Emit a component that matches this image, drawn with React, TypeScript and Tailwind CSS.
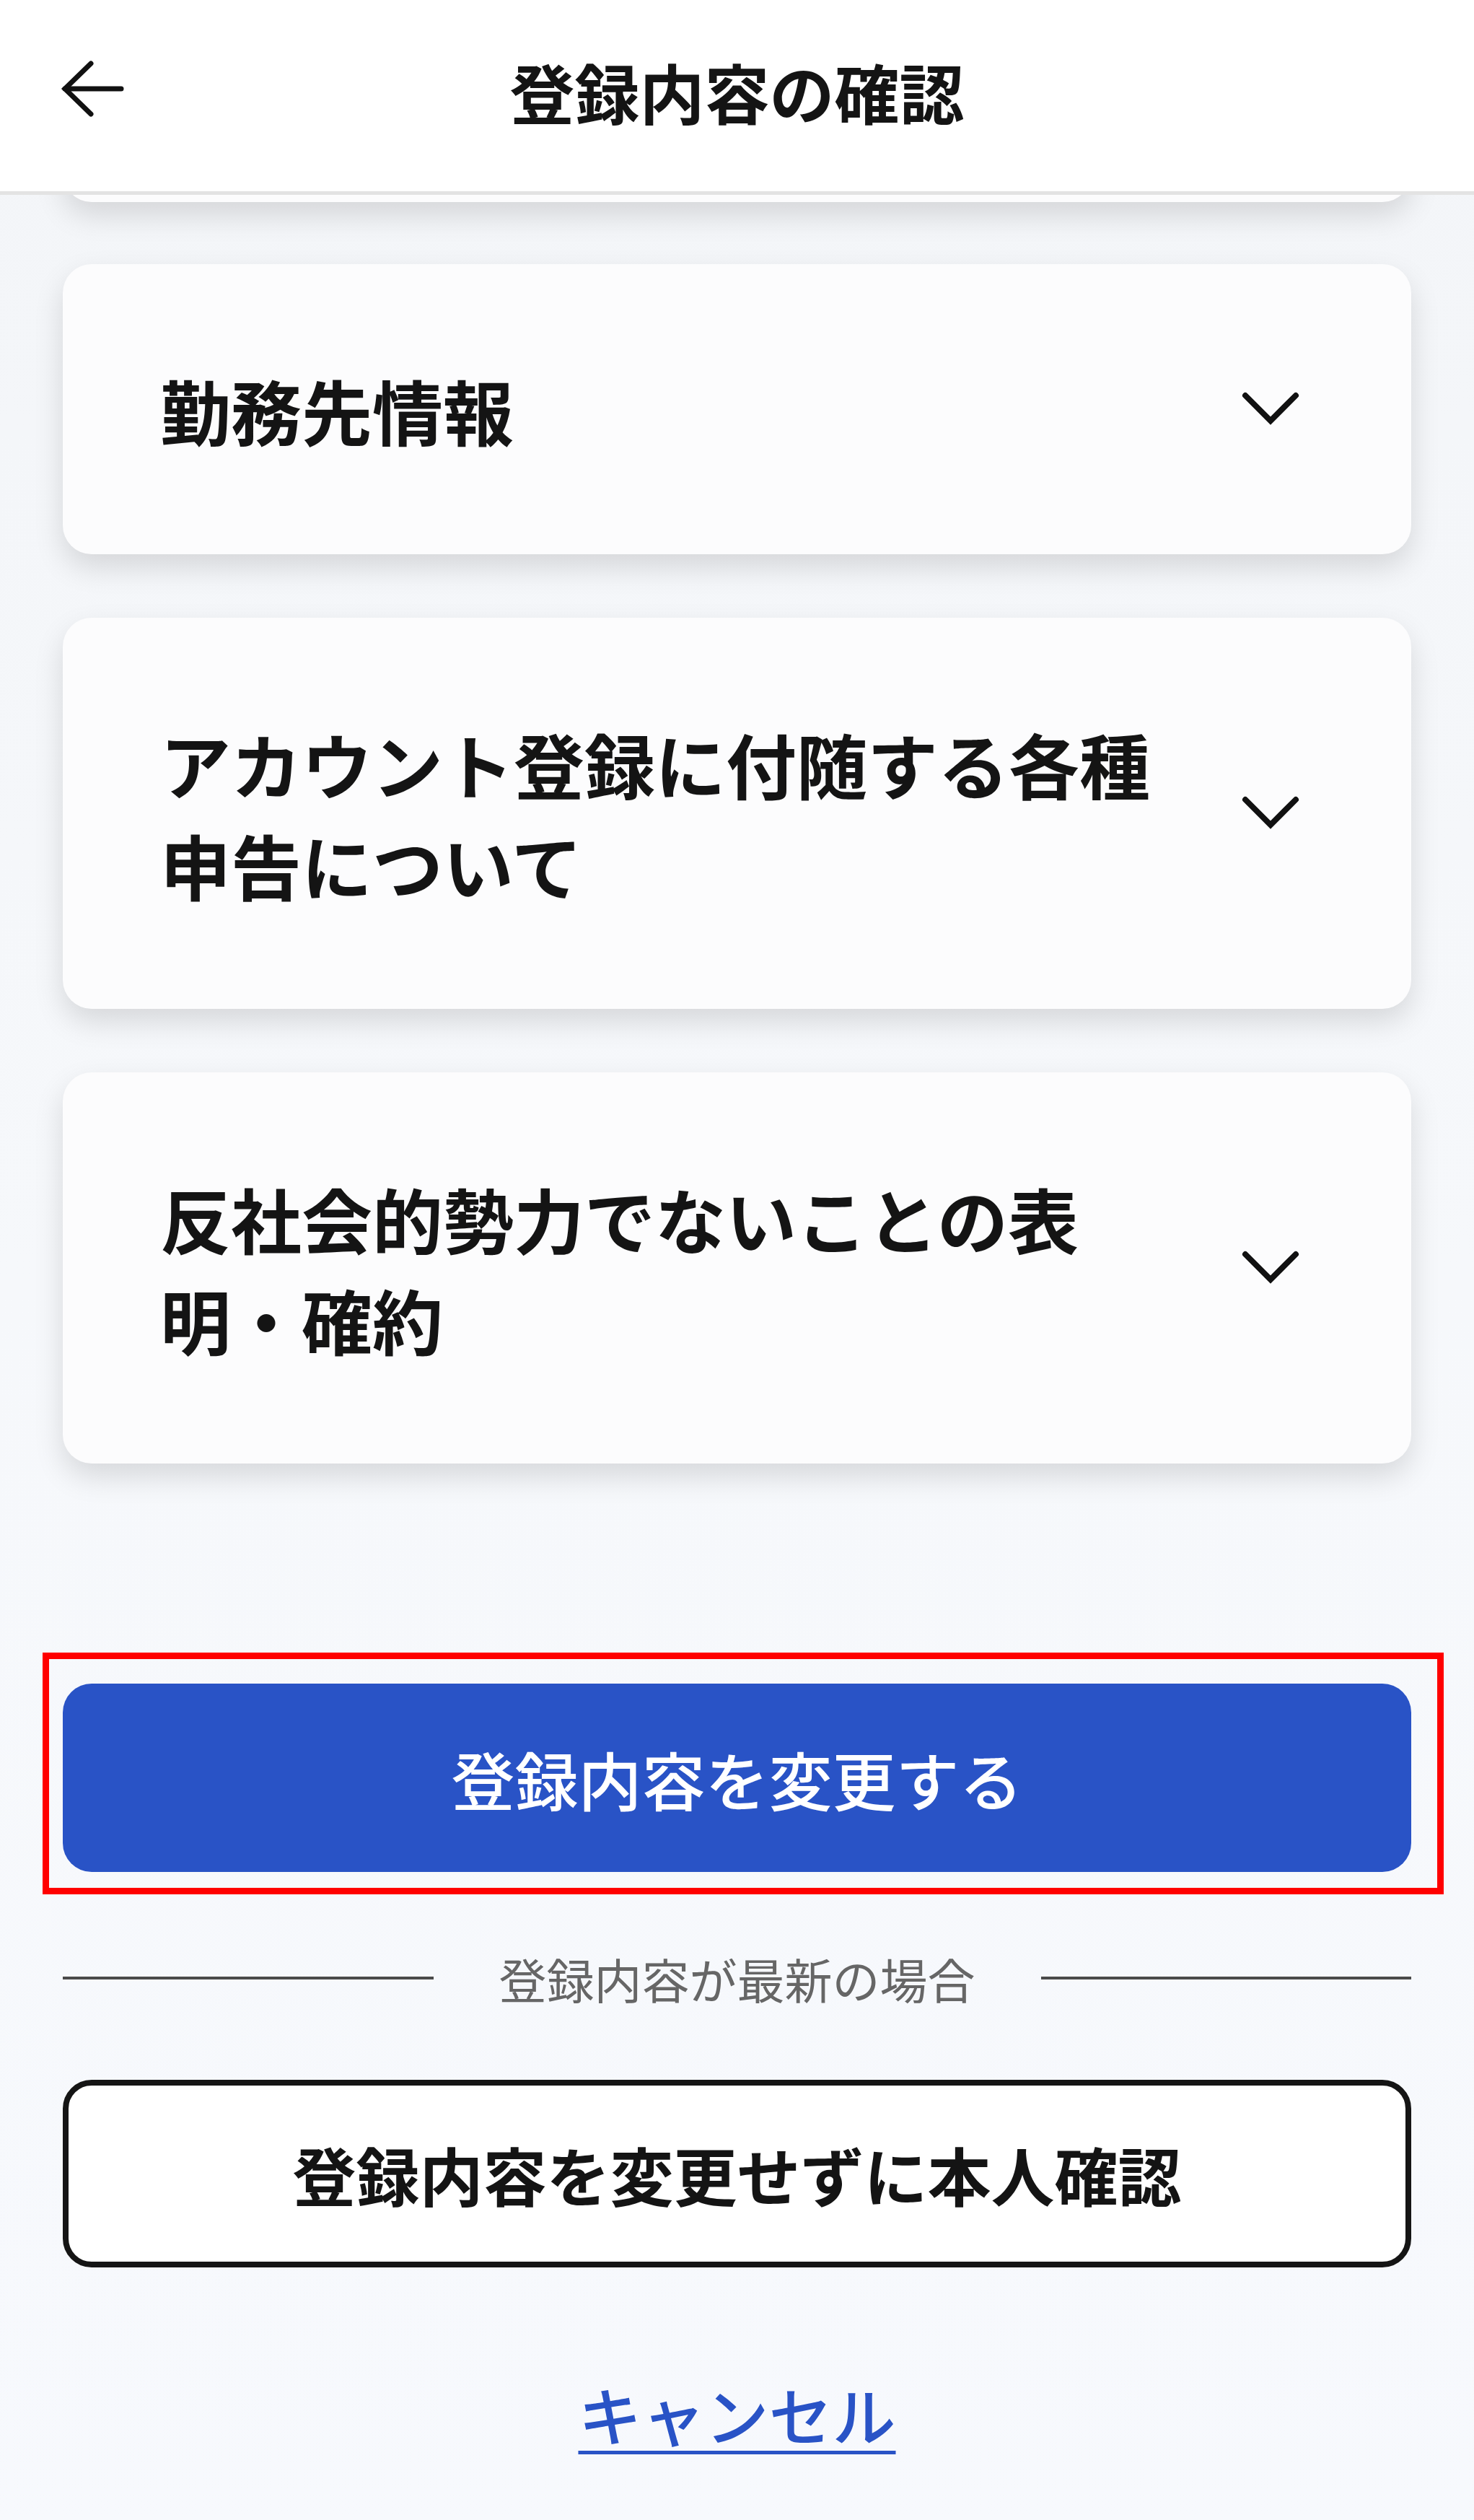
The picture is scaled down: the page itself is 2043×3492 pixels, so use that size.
import React from "react";

const sections = [
  { id: 1, title: "勤務先情報" },
  { id: 2, title: "アカウント登録に付随する各種申告について" },
  { id: 3, title: "反社会的勢力でないことの表明・確約" },
];

function BackArrow() {
  return (
    <svg width="88" height="78" viewBox="0 0 88 78" fill="none" stroke="#111" strokeWidth={7}>
      <path d="M42 4 L6 39 L42 74" strokeLinecap="round" strokeLinejoin="miter" />
      <path d="M6 39 H84" strokeLinecap="round" />
    </svg>
  );
}

function Chevron() {
  return (
    <svg width="80" height="48" viewBox="0 0 80 48" fill="none" stroke="#111" strokeWidth={8}>
      <path d="M5 5 L40 40 L75 5" strokeLinecap="round" />
    </svg>
  );
}

export default function App() {
  return (
    <div className="min-h-screen w-full bg-gradient-to-b from-[#f3f5f8] via-[#f6f8fb] to-[#f7f9fd] font-['Noto_Sans_CJK_JP','Noto_Sans',sans-serif] text-[#141414]">
      {/* ヘッダー */}
      <header className="relative z-10 h-[270px] bg-white border-b-[5px] border-[#e3e3e3] grid grid-cols-[1fr_auto_1fr] items-center px-[84px] pb-[14px]">
        <button className="justify-self-start mb-[6px]">
          <BackArrow />
        </button>
        <h1 className="text-[90px] leading-none font-semibold">登録内容の確認</h1>
        <div />
      </header>

      <main className="px-[87px] flex flex-col">
        {/* スクロールで隠れたカード */}
        <div className="-mt-[140px] h-[150px] rounded-[40px] bg-[#fcfcfd] shadow-[0_18px_40px_rgba(0,0,0,0.13)]" />

        <div className="mt-[86px] flex flex-col gap-[88px]">
          {sections.map((s) => (
            <div
              key={s.id}
              className="rounded-[40px] bg-[#fcfcfd] shadow-[0_18px_40px_rgba(0,0,0,0.13)] pl-[135px] pr-[155px] py-[131px] flex items-center gap-[80px]"
            >
              <p className="flex-1 min-w-0 text-[98px] leading-[140px] font-bold">{s.title}</p>
              <Chevron />
            </div>
          ))}
        </div>

        {/* 登録内容を変更する */}
        <div className="relative mt-[305px]">
          <button className="w-full h-[261px] rounded-[40px] bg-[#2953c6] text-white text-[88px] leading-none font-medium">
            登録内容を変更する
          </button>
          <div className="absolute -top-[43px] -bottom-[31px] -left-[28px] -right-[45px] border-[9px] border-[#ff0000] pointer-events-none" />
        </div>

        {/* 区切り */}
        <div className="mt-[107px] h-[80px] flex items-center gap-[91px]">
          <div className="flex-1 h-[4px] bg-[#4a4a4a]" />
          <span className="text-[66px] leading-[80px] text-[#666666]">登録内容が最新の場合</span>
          <div className="flex-1 h-[4px] bg-[#4a4a4a]" />
        </div>

        <button className="mt-[101px] h-[260px] rounded-[40px] border-[8px] border-[#151515] bg-white text-[88px] leading-none font-bold">
          登録内容を変更せずに本人確認
        </button>

        <div className="mt-[152px] flex justify-center pb-[100px]">
          <a className="text-[88px] leading-[100px] font-medium text-[#2953c6] underline decoration-[5px] underline-offset-[14px]">
            キャンセル
          </a>
        </div>
      </main>
    </div>
  );
}
